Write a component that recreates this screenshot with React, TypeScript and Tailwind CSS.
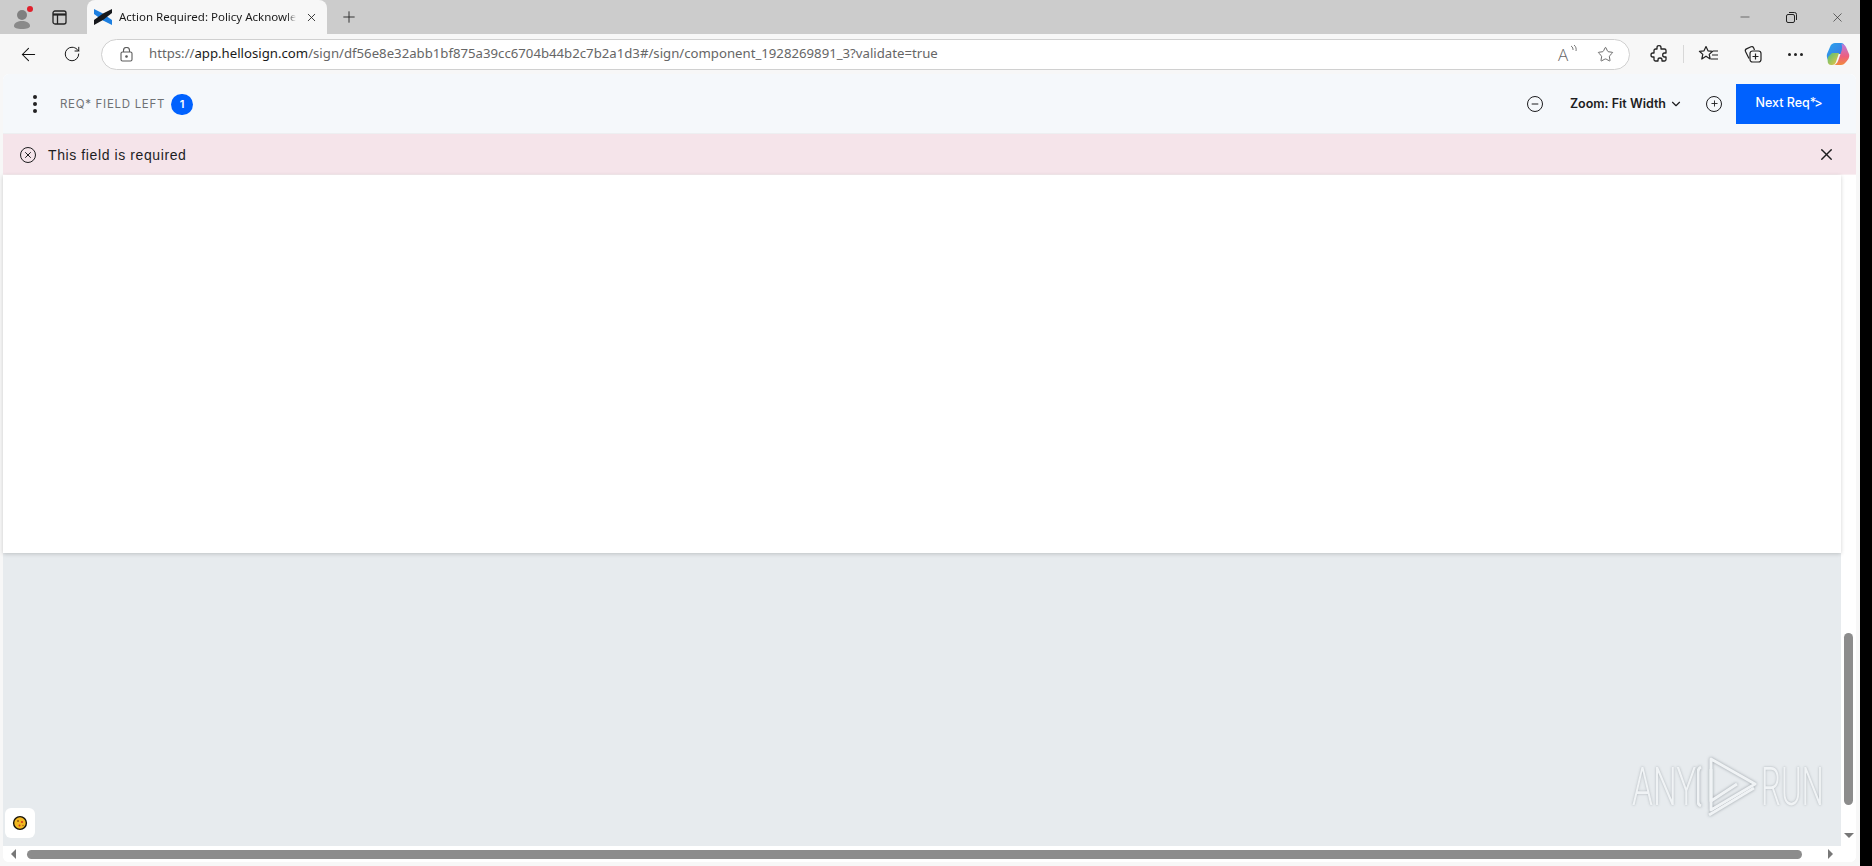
import React from 'react'
import { ArrowLeft, ChevronDown, Minus, Plus, RotateCw, Star, X } from 'lucide-react'

const ui = "font-['Open_Sans','Noto_Sans',sans-serif]"

const Logo = () => (
    <svg width="18" height="16" viewBox="0 0 18 16">
        <polygon points="0,0 8,4 18,11 18,16 9,11.500 0,5" fill="#1d7fe0" />
        <polygon points="18,0 18,4 9,11 0,16 0,11 9,4.500" fill="#16181c" />
    </svg>
)

const Copilot = () => (
    <svg width="24" height="24" viewBox="0 0 24 24">
        <defs>
            <linearGradient id="cpA" x1="0" y1="0" x2="1" y2="1">
                <stop offset="0" stopColor="#2aa6ee" />
                <stop offset="1" stopColor="#3f6fe0" />
            </linearGradient>
            <linearGradient id="cpB" x1="0" y1="0" x2="1" y2="1">
                <stop offset="0" stopColor="#4fbf7a" />
                <stop offset="1" stopColor="#f5c63c" />
            </linearGradient>
            <linearGradient id="cpC" x1="0" y1="0" x2="0" y2="1">
                <stop offset="0" stopColor="#b77ce0" />
                <stop offset="0.6" stopColor="#ee5f7c" />
                <stop offset="1" stopColor="#f28a3c" />
            </linearGradient>
        </defs>
        <path d="M9 1h6c2 0 3 1 3.500 3l-3 8H7l-5 6c-1-2-1.500-4-1-6l3-7c1-3 3-4 5-4z" fill="url(#cpA)" />
        <path d="M2 15l4-4h7l-3 9c-.7 2-2 3-4 3H5c-3 0-4-3-3-8z" fill="url(#cpB)" />
        <path d="M15.500 2c2 0 3.500 1 4.500 3l3 7c1 3-1 6-3 8-1.500 2-3 3-5 3H8c2-.5 3-2 4-4l3.500-10c.7-2 .7-5 0-7z" fill="url(#cpC)" />
    </svg>
)

const Cookie = () => (
    <svg width="16" height="16" viewBox="0 0 16 16">
        <circle cx="8" cy="8" r="6.400" fill="#f2b822" stroke="#15120a" strokeWidth="1.400" />
        <circle cx="6" cy="6" r="1" fill="#9a5b10" />
        <circle cx="10" cy="7" r="1.100" fill="#d83a20" />
        <circle cx="7.500" cy="10.500" r="1" fill="#d83a20" />
        <circle cx="11" cy="10.500" r="0.700" fill="#9a5b10" />
    </svg>
)

const Puzzle = () => (
    <svg width="20" height="20" viewBox="0 0 20 20" fill="none" stroke="#222" strokeWidth="1.300" strokeLinejoin="round">
        <path d="M8 3.500c0-2.400 4-2.400 4 0V5h3.500A1.500 1.500 0 0 1 17 6.500V9h-1.500c-2.400 0-2.400 4 0 4H17v2.500a1.500 1.500 0 0 1-1.500 1.500H13v-1.200c0-2.400-4-2.400-4 0V17H6.500A1.500 1.500 0 0 1 5 15.500V13H3.800c-2.400 0-2.400-4 0-4H5V6.500A1.500 1.500 0 0 1 6.500 5H8z" />
    </svg>
)

const Favorites = () => (
    <svg width="22" height="20" viewBox="0 0 22 20" fill="none" stroke="#222" strokeWidth="1.200" strokeLinejoin="round">
        <path d="M8 2.500l2 4.300 4.600.5-3.400 3.100 1 4.600L8 12.200l-4.200 2.800 1-4.600L1.400 7.300 6 6.800z" />
        <path d="M15 7h5M14 11h6M13 15h7" />
    </svg>
)

const Collections = () => (
    <svg width="20" height="20" viewBox="0 0 20 20" fill="none" stroke="#222" strokeWidth="1.200">
        <path d="M6 14.500 2.500 7.500a2 2 0 0 1 1-2.600L8 2.800a2 2 0 0 1 2.600.9L11.500 6" />
        <rect x="7" y="7" width="11" height="11" rx="2.500" />
        <path d="M12.500 9.500v6M9.500 12.500h6" />
    </svg>
)

const Profile = () => (
    <div className="relative w-[24px] h-[26px]">
        <svg width="24" height="26" viewBox="0 0 24 26">
            <circle cx="9" cy="11" r="5" fill="#808080" />
            <path d="M1 22c0-3.500 4-5 8-5s8 1.500 8 5c0 2-3 3-8 3s-8-1-8-3z" fill="#8a8a8a" />
        </svg>
        <span className="absolute top-[2px] right-[4px] w-[6px] h-[6px] rounded-full bg-[#e0202c]" />
    </div>
)

const CircleIcon = ({ plus }: { plus?: boolean }) => (
    <div className="w-[16px] h-[16px] rounded-full border-[1.5px] border-[#1d1d1f] flex items-center justify-center">
        {plus ? <Plus size={9} strokeWidth={2.4} color="#1d1d1f" /> : <Minus size={10} strokeWidth={2.4} color="#1d1d1f" />}
    </div>
)

const App = () => {
    return (
        <div className="w-[1872px] h-[866px] bg-black overflow-hidden">
            <div className={`w-[1860px] h-[866px] flex flex-col bg-[#f7f7f7] ${ui}`}>

                {/* tab strip */}
                <div className="h-[34px] flex items-center bg-[#cccccc] shrink-0">
                    <div className="w-[44px] pl-[13px] flex items-center"><Profile /></div>
                    <div className="w-[43px] pl-[8px] flex items-center">
                        <svg width="15" height="15" viewBox="0 0 15 15" fill="none" stroke="#222" strokeWidth="1.300">
                            <rect x="1" y="1" width="13" height="13" rx="2" />
                            <path d="M1 4.500h13" strokeWidth="2.200" />
                            <path d="M5.500 4.500V14" />
                        </svg>
                    </div>
                    <div className="relative w-[240px] h-[34px] bg-[#f7f7f7] rounded-t-lg flex items-center pl-[7px]">
                        <Logo />
                        <span className="ml-[7px] w-[177px] whitespace-nowrap text-[11.500px] text-[#1a1a1a] font-['Noto_Sans',sans-serif] [mask-image:linear-gradient(90deg,#000_95%,transparent)]">Action Required: Policy Acknowle</span>
                        <X size={13} strokeWidth={1.6} color="#222" className="ml-[9px]" />
                    </div>
                    <div className="pl-[13px]"><Plus size={18} strokeWidth={1.2} color="#222" /></div>
                    <div className="ml-auto flex items-center">
                        <div className="w-[46px] flex justify-center"><Minus size={14} strokeWidth={1} color="#222" /></div>
                        <div className="w-[46px] flex justify-center">
                            <svg width="11" height="11" viewBox="0 0 11 11" fill="none" stroke="#222" strokeWidth="1">
                                <rect x="0.500" y="2.500" width="8" height="8" rx="1.500" />
                                <path d="M3 0.500h5.500a2 2 0 0 1 2 2V8" />
                            </svg>
                        </div>
                        <div className="w-[46px] flex justify-center"><X size={15} strokeWidth={1} color="#222" /></div>
                    </div>
                </div>

                {/* toolbar */}
                <div className="h-[40px] flex items-center bg-[#f7f7f7] shrink-0">
                    <div className="w-[56px] flex justify-center"><ArrowLeft size={21} strokeWidth={1.2} color="#111" /></div>
                    <div className="w-[32px] flex justify-center"><RotateCw size={18} strokeWidth={1.3} color="#111" /></div>
                    <div className="ml-[13px] w-[1529px] h-[31px] rounded-full bg-white border border-[#d0d0d0] flex items-center pl-[18px] pr-[15px]">
                        <svg width="13" height="15" viewBox="0 0 13 15" fill="none" stroke="#5c5c5c" strokeWidth="1.100">
                            <rect x="1" y="5" width="11" height="9" rx="1.500" />
                            <path d="M3.500 5V3.500a3 3 0 0 1 6 0V5" />
                            <circle cx="6.500" cy="9.500" r="0.800" fill="#5c5c5c" />
                        </svg>
                        <span className="ml-[16px] text-[13.200px] text-[#666] whitespace-nowrap font-['Noto_Sans',sans-serif]">https://<span className="text-[#1a1a1a]">app.hellosign.com</span>/sign/df56e8e32abb1bf875a39cc6704b44b2c7b2a1d3#/sign/component_1928269891_3?validate=true</span>
                        <div className="ml-auto flex items-center gap-[23px]">
                            <span className="relative w-[16px] text-[17px] leading-none text-[#666] font-light">
                                A
                                <svg width="7" height="9" viewBox="0 0 7 9" fill="none" stroke="#666" strokeWidth="0.900" className="absolute -top-[1px] -right-[3px]">
                                    <path d="M1 1c2 1 2 3 2 4M4 0c2 1.500 2.500 4 2 6" />
                                </svg>
                            </span>
                            <Star size={17} strokeWidth={1.1} color="#444" />
                        </div>
                    </div>
                    <div className="ml-[19px]"><Puzzle /></div>
                    <div className="ml-[14px] w-px h-[18px] bg-[#d8d8d8]" />
                    <div className="ml-[14px]"><Favorites /></div>
                    <div className="ml-[23px]"><Collections /></div>
                    <div className="ml-[25px] flex gap-[3px]">
                        <span className="w-[3px] h-[3px] rounded-full bg-[#222]" />
                        <span className="w-[3px] h-[3px] rounded-full bg-[#222]" />
                        <span className="w-[3px] h-[3px] rounded-full bg-[#222]" />
                    </div>
                    <div className="ml-[23px]"><Copilot /></div>
                </div>

                {/* page */}
                <div className="relative flex-1 min-h-0 ml-[3px] mr-[4px] mb-[4px] flex flex-col bg-white rounded-t-md rounded-b-md font-['Inter',sans-serif]">
                    <div className="h-[60px] shrink-0 flex items-center bg-[#f5f8fb] border-b border-[#edeff1] pl-[30px] pr-[16px] rounded-t-md">
                        <div className="flex flex-col gap-[3px] mt-[1px]">
                            <span className="w-[4px] h-[4px] rounded-full bg-[#222]" />
                            <span className="w-[4px] h-[4px] rounded-full bg-[#222]" />
                            <span className="w-[4px] h-[4px] rounded-full bg-[#222]" />
                        </div>
                        <span className="ml-[23px] mt-[2px] text-[11.500px] tracking-[0.7px] text-[#6f7275]">REQ* FIELD LEFT</span>
                        <span className="ml-[6px] mt-[1px] w-[22px] h-[21px] rounded-full bg-[#0061fe] text-white text-[11px] font-semibold flex items-center justify-center">1</span>
                        <div className="ml-auto flex items-center">
                            <CircleIcon />
                            <span className="ml-[27px] mt-[1px] text-[12.500px] font-semibold text-[#1d1d1f] whitespace-nowrap">Zoom: Fit Width</span>
                            <ChevronDown size={14} strokeWidth={2} color="#1d1d1f" className="ml-[3px]" />
                            <div className="ml-[23px]"><CircleIcon plus /></div>
                            <button className="ml-[14px] w-[104px] h-[40px] bg-[#0061fe] text-white text-[12.500px] font-medium">Next Req<span className="tracking-[-2px]">*&gt;</span></button>
                        </div>
                    </div>
                    <div className="h-[41px] shrink-0 flex items-center bg-[#f5e4ea] pl-[17px] pr-[20px] pt-[1px] border-b border-[#f8eef1]">
                        <div className="w-[16px] h-[16px] rounded-full border-[1.5px] border-[#1d1d1f] flex items-center justify-center">
                            <X size={10} strokeWidth={2.4} color="#1d1d1f" />
                        </div>
                        <span className="ml-[12px] mt-[1px] text-[14px] tracking-[0.6px] text-[#1d1d1f] font-['Liberation_Sans',sans-serif]">This field is required</span>
                        <X size={19} strokeWidth={1.7} color="#1d1d1f" className="ml-auto" />
                    </div>
                    <div className="flex-1 min-h-0 flex">
                        <div className="flex-1 flex flex-col">
                            <div className="h-[378px] bg-white shadow-[0_1px_4px_rgba(0,0,0,0.18)] z-10" />
                            <div className="flex-1 bg-[#e7ebee]" />
                        </div>
                        <div className="w-[15px] flex flex-col items-center justify-end bg-white">
                            <div className="w-[9px] h-[172px] rounded-full bg-[#8c8c8c]" />
                            <div className="mt-[28px] mb-[8px] w-0 h-0 border-x-[5px] border-x-transparent border-t-[5px] border-t-[#777]" />
                        </div>
                    </div>
                    <div className="h-[16px] shrink-0 flex items-center bg-white rounded-b-md px-[8px]">
                        <div className="w-0 h-0 border-y-[5px] border-y-transparent border-r-[5px] border-r-[#777]" />
                        <div className="ml-[11px] w-[1775px] h-[9px] rounded-full bg-[#8c8c8c]" />
                        <div className="ml-[26px] w-0 h-0 border-y-[5px] border-y-transparent border-l-[5px] border-l-[#777]" />
                    </div>

                    {/* cookie button + watermark sit over the page */}
                    <div className="absolute left-[2px] bottom-[24px] w-[30px] h-[30px] rounded-md bg-white flex items-center justify-center">
                        <Cookie />
                    </div>
                    <div className="absolute left-[1629px] bottom-[45px] flex items-center text-[#f0f3f5] [text-shadow:0_0_3px_rgba(70,80,90,0.4)] font-['Roboto',sans-serif] font-light text-[54px] leading-none">
                        <span className="inline-block w-[60px] scale-x-[0.62] origin-left">ANY</span>
                        <svg width="60" height="60" viewBox="0 0 60 60" fill="none" stroke="#f0f3f5" strokeWidth="3" strokeLinejoin="round" className="ml-[5px] drop-shadow-[0_0_1.5px_rgba(70,80,90,0.5)]">
                            <path d="M4 10c-2 1-3 3-3 5v30c0 2 1 3 3 4" />
                            <path d="M14 2 58 27 14 53z" />
                            <path d="M14 12v32l26-17" />
                            <path d="M12 58l45-27" />
                        </svg>
                        <span className="inline-block w-[60px] ml-[4px] scale-x-[0.58] origin-left">RUN</span>
                    </div>
                </div>
            </div>
        </div>
    )
}

export default App
